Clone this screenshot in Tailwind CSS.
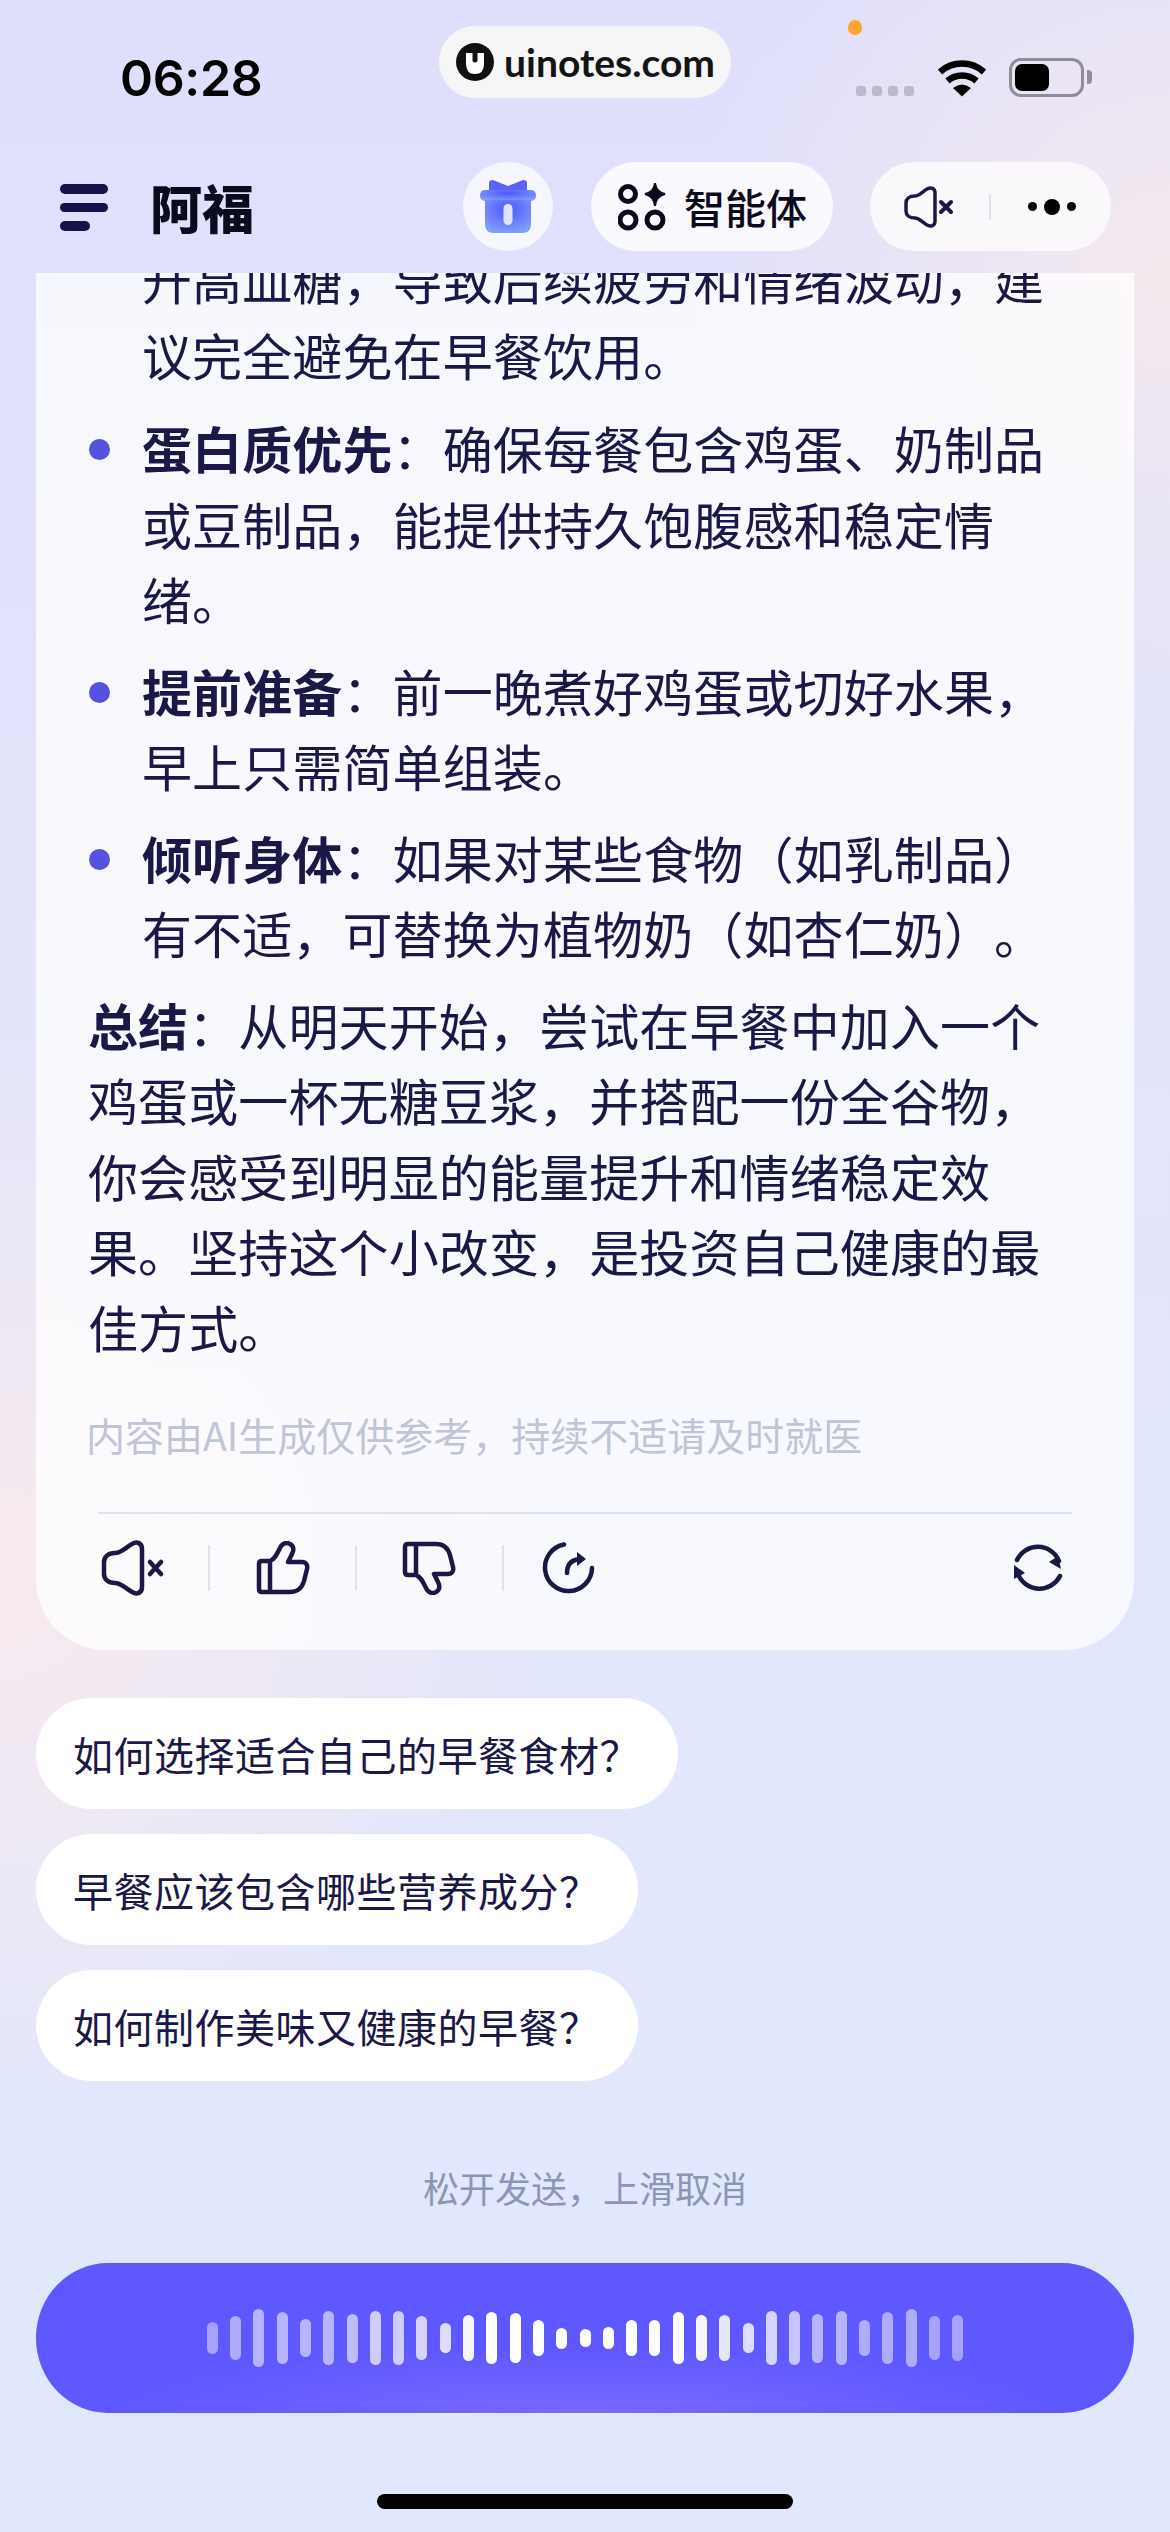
<!DOCTYPE html>
<html lang="zh-CN">
<head>
  <meta charset="UTF-8">
  <title>阿福</title>
  <script src="https://cdn.jsdelivr.net/npm/@tailwindcss/browser@4"></script>
</head>
<body class="m-0">
  <div class="relative w-[1170px] h-[2532px] overflow-hidden [text-spacing-trim:space-all] font-['Noto_Sans_CJK_SC',sans-serif] text-[#1b1848] bg-[radial-gradient(circle_at_100%_11%,#f4e9ee_0,#f4e9ee00_480px),radial-gradient(circle_at_0%_62%,#f8eaee_0,#f8eaee00_560px),linear-gradient(180deg,#dfdffc_0%,#e3e6fb_50%,#e1e8fd_100%)]">
    <!-- 状态栏 -->
    <div class="relative flex h-[162px]">
      <div class="w-[439px] pl-[120px] pt-[46px] font-['Inter'] font-semibold text-[50px] leading-[64px] tracking-[-.3px] text-black">06:28</div>
      <div class="flex items-center gap-[10px] w-[292px] h-[72px] mt-[26px] pl-[17px] rounded-full bg-[#f6f6f6]">
        <svg width="38" height="38" viewBox="0 0 38 38" class="shrink-0">
          <circle cx="19" cy="19" r="19" fill="#111"/>
          <path d="M10 10H16.500V18Q19 21 21.500 18V10H28V21Q28 31 19 31Q10 31 10 21Z" fill="#fff"/>
        </svg>
        <span class="font-['Lato'] font-bold text-[39px] leading-none text-[#141414]">uinotes.com</span>
      </div>
      <div class="flex items-start">
        <div class="flex gap-[6px] ml-[125px] mt-[86px]">
          <span class="w-[10px] h-[10px] rounded-[3px] bg-[#b9bacb]"></span>
          <span class="w-[10px] h-[10px] rounded-[3px] bg-[#b9bacb]"></span>
          <span class="w-[10px] h-[10px] rounded-[3px] bg-[#b9bacb]"></span>
          <span class="w-[10px] h-[10px] rounded-[3px] bg-[#b9bacb]"></span>
        </div>
        <svg width="50" height="38" viewBox="0 0 50 38" class="ml-[23px] mt-[59px]">
          <path d="M3 13A33 33 0 0 1 47 13" fill="none" stroke="#000" stroke-width="6.5"/>
          <path d="M10.500 22A22 22 0 0 1 39.500 22" fill="none" stroke="#000" stroke-width="6.500"/>
          <path d="M16 29Q25 22 34 29L25 37.500Z" fill="#000"/>
        </svg>
        <div class="relative ml-[22px] mt-[58px] w-[75px] h-[39px] rounded-[12px] border-[3px] border-[#8e8e98] p-[3px]">
          <div class="w-[34px] h-full rounded-[7px] bg-black"></div>
          <div class="absolute left-[75px] top-[9px] w-[5px] h-[14px] rounded-r-[4px] bg-[#8e8e98]"></div>
        </div>
      </div>
      <span class="absolute left-[848px] top-[20px] w-[14px] h-[15px] rounded-full bg-[#ffa42c]"></span>
    </div>

    <!-- 顶部导航 -->
    <div class="flex h-[111px]">
      <div class="flex flex-col gap-[9px] w-[90px] ml-[60px] pt-[22px]">
        <span class="block w-[48px] h-[9.500px] rounded-full bg-[#17134a]"></span>
        <span class="block w-[48px] h-[9.500px] rounded-full bg-[#17134a]"></span>
        <span class="block w-[30px] h-[9.500px] rounded-full bg-[#17134a]"></span>
      </div>
      <div class="w-[313px] h-[89px] flex items-center font-black text-[52px] leading-none text-[#0b0a1c]">阿福</div>
      <div class="flex items-center justify-center w-[90px] h-[89px] rounded-full bg-white/70">
        <svg width="60" height="56" viewBox="0 0 60 56">
          <defs>
            <radialGradient id="gift" cx="50%" cy="30%" r="70%">
              <stop offset="0" stop-color="#4f55ff"/>
              <stop offset="1" stop-color="#7f9ef8"/>
            </radialGradient>
          </defs>
          <path d="M11 4q0-3 4-3l15 6 15-6q4 0 4 3v8h-38z" fill="#5a62fa"/>
          <rect x="2" y="11" width="56" height="11" rx="5" fill="url(#gift)"/>
          <path d="M7 21h46v24q0 9-9 9h-28q-9 0-9-9z" fill="url(#gift)"/>
          <rect x="25.500" y="25" width="9" height="21" rx="4.500" fill="#dfe4ff"/>
        </svg>
      </div>
      <div class="flex items-center w-[242px] h-[89px] ml-[38px] pl-[27px] gap-[18px] rounded-full bg-[#faf9fd] font-medium text-[41px] text-[#0b0a1c]">
        <svg width="48" height="48" viewBox="0 0 48 48" class="shrink-0">
          <circle cx="10" cy="11" r="7.500" fill="none" stroke="#0b0a1c" stroke-width="5"/>
          <circle cx="10" cy="37" r="8" fill="none" stroke="#0b0a1c" stroke-width="5"/>
          <circle cx="37" cy="37" r="8" fill="none" stroke="#0b0a1c" stroke-width="5"/>
          <path d="M37 0Q38 9 47 11Q38 13 37 23Q36 13 27 11Q36 9 37 0Z" fill="#0b0a1c" stroke="#0b0a1c" stroke-width="2"/>
        </svg>
        <span>智能体</span>
      </div>
      <div class="flex items-center w-[241px] h-[89px] ml-[37px] pl-[34px] rounded-full bg-[#faf8fb]">
        <svg width="50" height="42" viewBox="0 0 50 42" class="shrink-0">
          <path d="M11 10C15 10 18 6 23 3C27 1 31 2 31 7V35C31 40 27 41 23 39C18 36 15 32 11 32C5 32 2 29 2 25V17C2 13 5 10 11 10Z" fill="none" stroke="#1b1848" stroke-width="3.500" stroke-linejoin="round"/>
          <path d="M37 16L47 26M47 16L37 26" fill="none" stroke="#1b1848" stroke-width="4" stroke-linecap="round"/>
        </svg>
        <span class="w-[2px] h-[26px] ml-[35px] bg-[#dfe0ee]"></span>
        <div class="flex items-center ml-[37px] gap-[7px]">
          <span class="w-[9px] h-[9px] rounded-full bg-black"></span>
          <span class="w-[16px] h-[16px] rounded-full bg-black"></span>
          <span class="w-[9px] h-[9px] rounded-full bg-black"></span>
        </div>
      </div>
    </div>

    <!-- 回答卡片 -->
    <div class="mx-[36px] h-[1377px] overflow-hidden rounded-b-[70px] bg-white/75">
      <div class="-mt-[32px] pl-[52px] text-[50px] leading-[75.500px] tracking-[.12px]">
        <div class="pl-[54px] mb-[18px]">升高血糖，导致后续疲劳和情绪波动，建<br>议完全避免在早餐饮用。</div>
        <div class="flex mb-[16px]">
          <span class="shrink-0 w-[21px] h-[21px] ml-[1px] mt-[29px] mr-[32px] rounded-full bg-[#5552e0]"></span>
          <div><b class="font-bold">蛋白质优先</b>：确保每餐包含鸡蛋、奶制品<br>或豆制品，能提供持久饱腹感和稳定情<br>绪。</div>
        </div>
        <div class="flex mb-[16px]">
          <span class="shrink-0 w-[21px] h-[21px] ml-[1px] mt-[29px] mr-[32px] rounded-full bg-[#5552e0]"></span>
          <div><b class="font-bold">提前准备</b>：前一晚煮好鸡蛋或切好水果，<br>早上只需简单组装。</div>
        </div>
        <div class="flex mb-[16px]">
          <span class="shrink-0 w-[21px] h-[21px] ml-[1px] mt-[29px] mr-[32px] rounded-full bg-[#5552e0]"></span>
          <div><b class="font-bold">倾听身体</b>：如果对某些食物（如乳制品）<br>有不适，可替换为植物奶（如杏仁奶）。</div>
        </div>
        <div><b class="font-bold">总结</b>：从明天开始，尝试在早餐中加入一个<br>鸡蛋或一杯无糖豆浆，并搭配一份全谷物，<br>你会感受到明显的能量提升和情绪稳定效<br>果。坚持这个小改变，是投资自己健康的最<br>佳方式。</div>
      </div>
      <p class="mt-[42px] ml-[50px] text-[39px] leading-[56px] text-[#c0c5d6]">内容由AI生成仅供参考，持续不适请及时就医</p>
      <div class="mx-[62px] mt-[50px] h-[2px] bg-[#e0e1ee]"></div>
      <div class="flex items-center h-[56px] mt-[26px] ml-[65px] mr-[69px]">
        <svg width="64" height="56" viewBox="0 0 64 56">
          <path d="M14 13C20 13 24 8 31 4C36 1 41 3 41 9V47C41 53 36 55 31 52C24 48 20 43 14 43C7 43 3 39 3 34V22C3 17 7 13 14 13Z" fill="none" stroke="#1b1848" stroke-width="4.500" stroke-linejoin="round"/>
          <path d="M49 22L60 34M60 22L49 34" fill="none" stroke="#1b1848" stroke-width="4.500" stroke-linecap="round"/>
        </svg>
        <span class="w-[2px] h-[46px] ml-[43px] bg-[#e0e1ee]"></span>
        <svg width="54" height="54" viewBox="0 0 54 54" class="ml-[46px]">
          <path d="M14 20C19 18 21 13 24 7C26 2 31 1 34 3C38 5 38 9 36 13L32 21H46C50 21 52 24 51 28L48 40C46 47 41 51 34 51H14ZM14 20H6Q3 20 3 23V48Q3 51 6 51H14Z" fill="none" stroke="#1b1848" stroke-width="4.500" stroke-linejoin="round"/>
        </svg>
        <span class="w-[2px] h-[46px] ml-[45px] bg-[#e0e1ee]"></span>
        <svg width="54" height="54" viewBox="0 0 54 54" class="ml-[45px]">
          <g transform="matrix(1 0 0 -1 0 54)">
            <path d="M14 20C19 18 21 13 24 7C26 2 31 1 34 3C38 5 38 9 36 13L32 21H46C50 21 52 24 51 28L48 40C46 47 41 51 34 51H14ZM14 20H6Q3 20 3 23V48Q3 51 6 51H14Z" fill="none" stroke="#1b1848" stroke-width="4.500" stroke-linejoin="round"/>
          </g>
        </svg>
        <span class="w-[2px] h-[46px] ml-[46px] bg-[#e0e1ee]"></span>
        <svg width="54" height="54" viewBox="0 0 54 54" class="ml-[38px]">
          <path d="M50 27A23.500 23.500 0 1 1 22 3.500" fill="none" stroke="#1b1848" stroke-width="4.500" stroke-linecap="round"/>
          <path d="M25 32C25 24 29 18 40 18" fill="none" stroke="#1b1848" stroke-width="4.500" stroke-linecap="round"/>
          <path d="M35 11L44 18L35 25Z" fill="#1b1848"/>
        </svg>
        <svg width="54" height="54" viewBox="0 0 54 54" class="ml-auto">
          <path d="M6 19A23 23 0 0 1 48 20" fill="none" stroke="#1b1848" stroke-width="4.500" stroke-linecap="round"/>
          <path d="M49 35A23 23 0 0 1 7 33" fill="none" stroke="#1b1848" stroke-width="4.500" stroke-linecap="round"/>
          <path d="M38 21L47 15L50 28Z" fill="#1b1848"/>
          <path d="M14 32L3 24L3 38Z" fill="#1b1848"/>
        </svg>
      </div>
    </div>

    <!-- 推荐问题 -->
    <div class="flex flex-col items-start gap-[25px] mt-[48px] ml-[36px] text-[40px] tracking-[.5px]">
      <div class="flex items-center h-[111px] pl-[37px] pr-[38px] rounded-full bg-white">如何选择适合自己的早餐食材？</div>
      <div class="flex items-center h-[111px] pl-[37px] pr-[38px] rounded-full bg-white">早餐应该包含哪些营养成分？</div>
      <div class="flex items-center h-[111px] pl-[37px] pr-[38px] rounded-full bg-white">如何制作美味又健康的早餐？</div>
    </div>

    <p class="mt-[81px] text-center text-[36px] leading-[50px] text-[#8c95b3]">松开发送，上滑取消</p>

    <!-- 语音按钮 -->
    <div id="wave" class="flex items-center justify-center gap-[12.300px] h-[150px] mx-[36px] mt-[51px] rounded-[72px/75px] bg-[radial-gradient(ellipse_45%_45%_at_50%_100%,#7a69ff,#5f57ff)]"></div>

    <div class="w-[416px] h-[15px] mx-auto mt-[81px] rounded-full bg-black"></div>
  </div>

  <script>
    // 声波条：[高度, 透明度]
    const bars = [
      [32, .45], [44, .5], [58, .55], [52, .55], [38, .55], [54, .55], [49, .6], [54, .7], [54, .7], [44, .75], [30, .8],
      [46, .95], [52, 1], [50, 1], [36, 1], [21, 1], [18, 1], [22, 1], [36, 1], [36, 1], [52, 1], [46, .95],
      [46, .85], [30, .8], [54, .75], [54, .65], [49, .55], [54, .55], [36, .5], [52, .5], [58, .5], [44, .45], [46, .45]
    ];
    document.getElementById('wave').innerHTML = bars.map(([h, o]) =>
      `<span class="w-[11px] rounded-full bg-white" style="height:${h}px;opacity:${o}"></span>`
    ).join('');
  </script>
</body>
</html>
